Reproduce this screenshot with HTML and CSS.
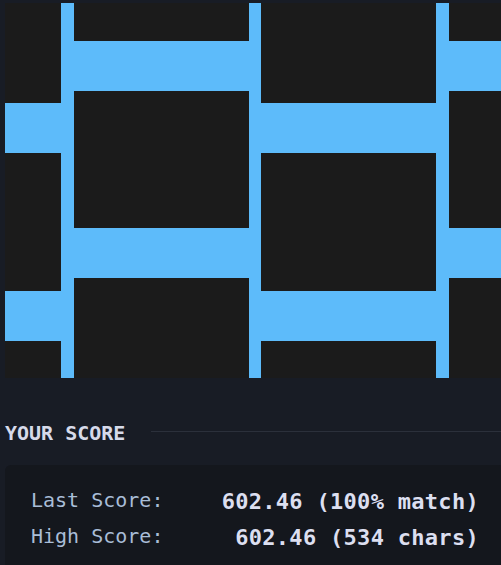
FILE: index.html
```html
<!DOCTYPE html>
<html lang="en">
<head>
<meta charset="utf-8">
<title>Your Score</title>
<link rel="stylesheet" href="styles.css">
</head>
<body>
<div class="page">
  <div class="canvas">
    <svg class="art" width="500" height="375" viewBox="0 0 500 375" xmlns="http://www.w3.org/2000/svg">
      <rect x="0" y="0" width="500" height="375" fill="#1b1b1b"/>
      <g fill="#5dbbfa">
        <rect x="56" y="0" width="13" height="375"/>
        <rect x="244" y="0" width="12" height="375"/>
        <rect x="431" y="0" width="13" height="375"/>
        <rect x="0" y="100" width="56" height="50"/>
        <rect x="0" y="288" width="56" height="50"/>
        <rect x="69" y="38" width="175" height="50"/>
        <rect x="69" y="225" width="175" height="50"/>
        <rect x="256" y="100" width="175" height="50"/>
        <rect x="256" y="288" width="175" height="50"/>
        <rect x="444" y="38" width="56" height="50"/>
        <rect x="444" y="225" width="56" height="50"/>
      </g>
    </svg>
  </div>

  <div class="heading">
    <h2 class="heading-title">YOUR SCORE</h2>
    <span class="heading-rule"></span>
  </div>

  <div class="score-box">
    <div class="score-row">
      <span class="score-label">Last Score:</span>
      <span class="score-value">602.46 (100% match)</span>
    </div>
    <div class="score-row">
      <span class="score-label">High Score:</span>
      <span class="score-value">602.46 (534 chars)</span>
    </div>
  </div>
</div>
</body>
</html>
```
FILE: styles.css
```css
html, body {
  margin: 0;
  padding: 0;
  background: #181c25;
  overflow: hidden;
}

body {
  width: 501px;
  height: 565px;
  font-family: "DejaVu Sans Mono", "Liberation Mono", monospace;
}

.page {
  width: 500px;
  padding: 3px 0 0 5px;
}

.canvas {
  width: 500px;
  height: 375px;
}

.art {
  display: block;
}

.heading {
  display: flex;
  align-items: center;
  gap: 26px;
  margin-top: 43px;
  height: 24px;
}

.heading-title {
  margin: 0;
  font-size: 20px;
  line-height: 24px;
  font-weight: bold;
  color: #d6daea;
  white-space: nowrap;
}

.heading-rule {
  flex: 1;
  height: 1px;
  background: #2b303b;
  margin-top: -3px;
}

.score-box {
  margin-top: 20px;
  width: 500px;
  box-sizing: border-box;
  padding: 17px 26px 20px 26px;
  background: #14171d;
  border-radius: 6px;
}

.score-row {
  display: flex;
  justify-content: space-between;
  align-items: baseline;
  height: 36px;
  line-height: 36px;
}

.score-label {
  font-size: 20px;
  color: #a9bdd7;
}

.score-value {
  font-size: 22px;
  font-weight: bold;
  letter-spacing: 0.3px;
  color: #dcdff0;
  position: relative;
  top: 2px;
}
```
